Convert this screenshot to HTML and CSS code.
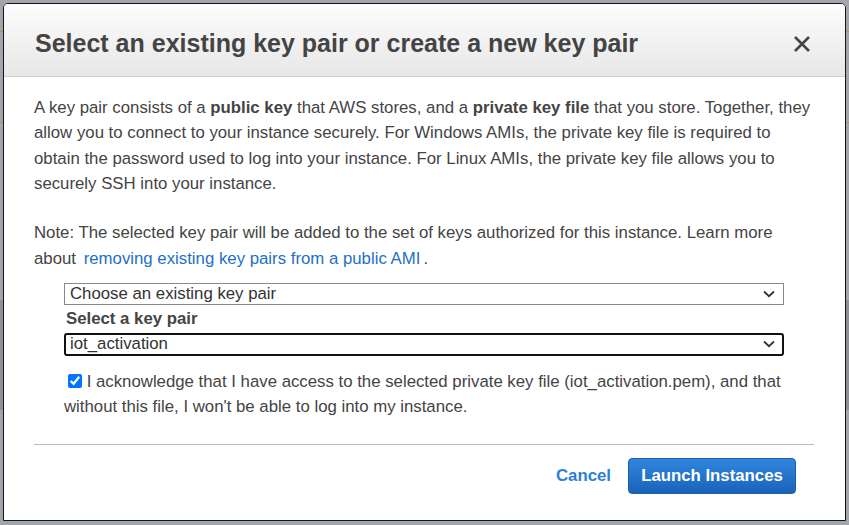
FILE: index.html
```html
<!DOCTYPE html>
<html>
<head>
<meta charset="utf-8">
<link rel="stylesheet" href="styles.css">
</head>
<body>
<div class="backdrop">
  <div class="modal">
    <div class="modal-header">
      <h1 class="title">Select an existing key pair or create a new key pair</h1>
      <button class="close" aria-label="Close">
        <svg width="18" height="18" viewBox="0 0 18 18"><path d="M2 2 L16 16 M16 2 L2 16" stroke="#454545" stroke-width="2.6" fill="none"/></svg>
      </button>
    </div>
    <div class="modal-body">
      <p class="para">A key pair consists of a <b>public key</b> that AWS stores, and a <b>private key file</b> that you store. Together, they allow you to connect to your instance securely. For Windows AMIs, the private key file is required to obtain the password used to log into your instance. For Linux AMIs, the private key file allows you to securely SSH into your instance.</p>
      <p class="para note">Note: The selected key pair will be added to the set of keys authorized for this instance. Learn more about <a class="link" href="#">removing existing key pairs from a public AMI</a>.</p>
      <div class="form">
        <div class="select">
          <span class="select-text">Choose an existing key pair</span>
          <svg class="chev" width="12" height="8" viewBox="0 0 12 8"><path d="M1 1.5 L6 6.2 L11 1.5" stroke="#333" stroke-width="1.8" fill="none"/></svg>
        </div>
        <div class="label">Select a key pair</div>
        <div class="select focused">
          <span class="select-text">iot_activation</span>
          <svg class="chev" width="12" height="8" viewBox="0 0 12 8"><path d="M1 1.5 L6 6.2 L11 1.5" stroke="#333" stroke-width="1.8" fill="none"/></svg>
        </div>
        <p class="ack"><input type="checkbox" class="check" checked> I acknowledge that I have access to the selected private key file (iot_activation.pem), and that without this file, I won't be able to log into my instance.</p>
      </div>
      <div class="sep"></div>
      <div class="footer">
        <a class="cancel" href="#">Cancel</a>
        <button class="primary">Launch Instances</button>
      </div>
    </div>
  </div>
</div>
</body>
</html>
```
FILE: styles.css
```css
html, body {
  margin: 0;
  padding: 0;
  height: 100%;
}
body {
  font-family: "Liberation Sans", Arial, sans-serif;
  background: #a2a5ab;
}
.backdrop {
  height: 525px;
  box-sizing: border-box;
  padding: 3px 3px 3px 3px;
  background:
    linear-gradient(#c98a3e, #c98a3e) 0 31px / 100% 1px no-repeat,
    linear-gradient(#c98a3e, #c98a3e) 0 122px / 100% 1px no-repeat,
    linear-gradient(#8e9197, #8e9197) 0 300px / 100% 110px no-repeat,
    #a2a5ab;
}
.modal {
  width: 843px;
  height: 518px;
  box-sizing: border-box;
  background: #fff;
  border: 1px solid #151515;
  border-radius: 5px 5px 0 0;
  display: flex;
  flex-direction: column;
  overflow: hidden;
}
.modal-header {
  height: 73px;
  box-sizing: border-box;
  background: linear-gradient(#fdfdfd, #e7e7e7);
  border-bottom: 1px solid #cfcfcf;
  display: flex;
  align-items: center;
  justify-content: space-between;
  padding: 0 34px 0 31px;
}
.title {
  margin: 0;
  font-size: 25px;
  font-weight: bold;
  color: #444;
  padding-top: 6px;
}
.close {
  border: 0;
  background: none;
  padding: 0;
  width: 18px;
  height: 18px;
  margin-top: 8px;
  display: flex;
}
.modal-body {
  padding: 18px 30px 0 30px;
  color: #444;
  font-size: 16.8px;
}
.para {
  margin: 0;
  line-height: 25.4px;
}
.note {
  margin-top: 23.5px;
}
.link {
  color: #1f6fc5;
  text-decoration: none;
  margin-left: 3px;
  margin-right: 3px;
}
.form {
  margin: 12px 0 0 30px;
  width: 720px;
}
.select {
  position: relative;
  height: 22px;
  box-sizing: border-box;
  border: 1px solid #8a8a8a;
  display: flex;
  align-items: center;
  padding-left: 5px;
  color: #333;
}
.select.focused {
  height: 23px;
  border: 2px solid #111;
  border-radius: 3px;
  padding-left: 4px;
}
.chev {
  position: absolute;
  right: 8px;
  top: 6px;
}
.focused .chev {
  right: 7px;
  top: 5px;
}
.select-text {
  font-size: 16.8px;
  line-height: 18px;
}
.label {
  font-weight: bold;
  font-size: 16.8px;
  line-height: 18px;
  margin: 5px 0 5px 2px;
  color: #444;
}
.ack {
  margin: 13px 0 0 0;
  line-height: 25.5px;
  color: #444;
}
.check {
  width: 14px;
  height: 14px;
  margin: 0 0 0 4px;
  vertical-align: -1px;
}
.sep {
  margin-top: 24px;
  height: 1px;
  background: #bdbdbd;
  width: 780px;
}
.footer {
  display: flex;
  justify-content: flex-end;
  align-items: center;
  padding-right: 19px;
  margin-top: 13px;
  gap: 17px;
}
.cancel {
  color: #2c7fd7;
  font-weight: bold;
  text-decoration: none;
  font-size: 16.8px;
}
.primary {
  font-family: "Liberation Sans", Arial, sans-serif;
  height: 36px;
  width: 168px;
  border: 1px solid #1b5fae;
  border-radius: 4px;
  background: linear-gradient(#2f86de, #1b63ba);
  color: #fff;
  font-weight: bold;
  font-size: 16.8px;
  padding: 0;
}
```
